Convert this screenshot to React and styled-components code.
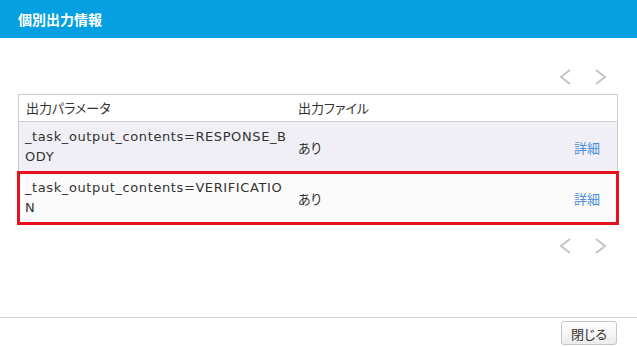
import styled, { createGlobalStyle } from "styled-components";

const GlobalStyle = createGlobalStyle`
  html, body {
    margin: 0;
    padding: 0;
    background: #ffffff;
  }
  body {
    font-family: "DejaVu Sans", "Noto Sans CJK JP", sans-serif;
    color: #333333;
  }
`;

const rows = [
  { param: "_task_output_contents=RESPONSE_BODY", file: "あり", selected: false },
  { param: "_task_output_contents=VERIFICATION", file: "あり", selected: true },
];

const Chevron = ({ dir }) => (
  <svg width="12" height="16" viewBox="0 0 12 16">
    <polyline
      points={dir === "left" ? "11,1 2,8 11,15" : "1,1 10,8 1,15"}
      fill="none"
      stroke="#c4c4c4"
      strokeWidth="2"
    />
  </svg>
);

const App = () => {
  return (
    <>
      <GlobalStyle />
      <Dialog>
        <Header>個別出力情報</Header>
        <Content>
          <Pager $top>
            <PageButton><Chevron dir="left" /></PageButton>
            <PageButton><Chevron dir="right" /></PageButton>
          </Pager>
          <Table>
            <HeadRow>
              <HeadCell>出力パラメータ</HeadCell>
              <HeadCell>出力ファイル</HeadCell>
              <HeadCell />
            </HeadRow>
            {rows.map((r, i) => (
              <Row key={i} $alt={i % 2 === 0} $selected={r.selected}>
                <ParamCell>{r.param}</ParamCell>
                <Cell>{r.file}</Cell>
                <LinkCell>詳細</LinkCell>
              </Row>
            ))}
          </Table>
          <Pager>
            <PageButton><Chevron dir="left" /></PageButton>
            <PageButton><Chevron dir="right" /></PageButton>
          </Pager>
        </Content>
        <Footer>
          <CloseButton>閉じる</CloseButton>
        </Footer>
      </Dialog>
    </>
  );
};

const jp = `
  font-family: "Noto Sans CJK JP", sans-serif;
  font-feature-settings: "palt";
`;

const Dialog = styled.div`
  display: flex;
  flex-direction: column;
  height: 100vh;
`;

const Header = styled.div`
  ${jp}
  height: 38px;
  line-height: 38px;
  padding-left: 18px;
  background: #04a0e1;
  color: #ffffff;
  font-size: 14px;
  font-weight: 700;
`;

const Content = styled.div`
  flex: 1;
  padding: 0 20px 0 18px;
`;

const Pager = styled.div`
  display: flex;
  justify-content: flex-end;
  align-items: center;
  gap: 24px;
  height: 24px;
  padding-right: 10px;
  margin: ${(p) => (p.$top ? "27px 0 5px" : "10px 0 0")};
`;

const PageButton = styled.span`
  display: flex;
  cursor: pointer;
`;

const Table = styled.div`
  border: 1px solid #cccccc;
  width: 598px;
`;

const columns = `
  display: grid;
  grid-template-columns: 272px 1fr 60px;
  align-items: center;
`;

const HeadRow = styled.div`
  ${columns}
  ${jp}
  height: 26px;
  background: #ffffff;
  border-bottom: 1px solid #cccccc;
  font-size: 13px;
`;

const HeadCell = styled.div`
  padding-left: 7px;
  line-height: 20px;
`;

const Row = styled.div`
  ${columns}
  background: ${(p) => (p.$alt ? "#f0eff5" : "#fbfbfb")};
  border-bottom: 1px solid #d6d6d6;
  &:last-child {
    border-bottom: none;
  }
  outline: ${(p) => (p.$selected ? "3px solid #e8121f" : "none")};
  outline-offset: ${(p) => (p.$selected ? "-1px" : "0")};
`;

const ParamCell = styled.div`
  padding: 5px 0 5px 6px;
  font-size: 13px;
  letter-spacing: 0.6px;
  line-height: 20px;
  word-break: break-all;
  color: #333333;
`;

const Cell = styled.div`
  ${jp}
  padding-left: 7px;
  font-size: 13px;
`;

const LinkCell = styled.div`
  ${jp}
  text-align: center;
  font-size: 13px;
  color: #4a8fd6;
  cursor: pointer;
`;

const Footer = styled.div`
  height: 30px;
  border-top: 1px solid #d4d4d4;
  display: flex;
  justify-content: flex-end;
  align-items: flex-start;
  padding: 3px 20px 0 0;
  box-sizing: border-box;
`;

const CloseButton = styled.button`
  ${jp}
  width: 56px;
  height: 24px;
  border: 1px solid #c6c6c6;
  border-radius: 3px;
  background: linear-gradient(#ffffff, #ececec);
  font-size: 13px;
  color: #333333;
  padding: 0;
  cursor: pointer;
`;

export default App;
